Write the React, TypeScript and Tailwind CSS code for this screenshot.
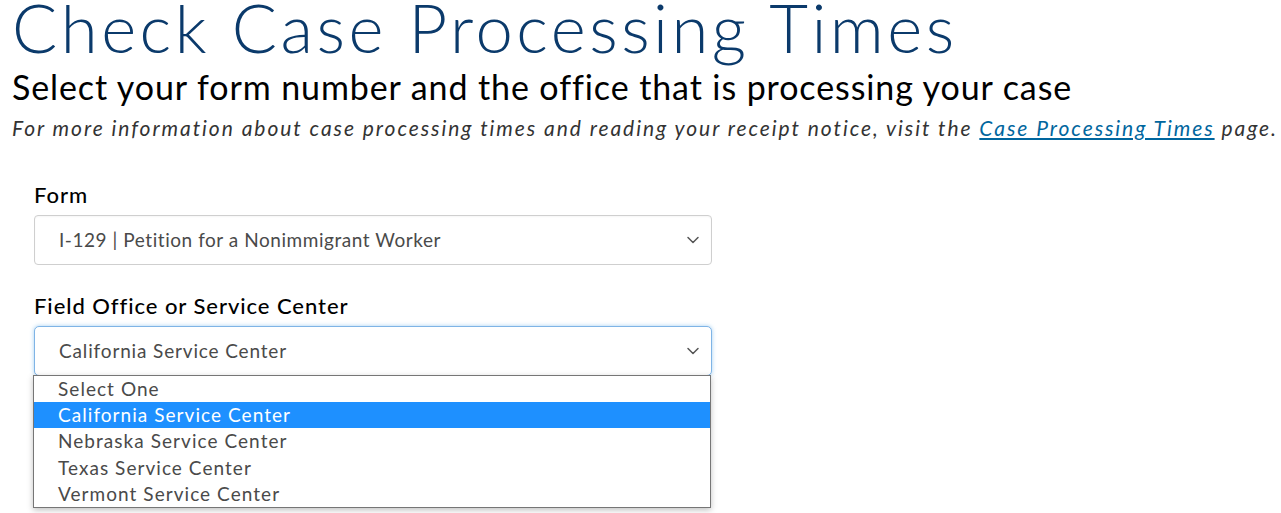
import { ChevronDown } from 'lucide-react'

const offices = [
  'Select One',
  'California Service Center',
  'Nebraska Service Center',
  'Texas Service Center',
  'Vermont Service Center',
]

export default function App() {
  return (
    <main className="h-[513px] overflow-hidden bg-white font-['Lato',sans-serif]">
      <div className="pl-3">
        <h1 className="whitespace-nowrap text-[67px] font-light leading-[54px] tracking-[3.5px] text-[#0b3a6b]">
          Check Case Processing Times
        </h1>
        <h2 className="mt-[16px] whitespace-nowrap text-[34px] leading-[34px] tracking-[0.9px] text-black">
          Select your form number and the office that is processing your case
        </h2>
        <p className="mt-[11px] whitespace-nowrap text-[21px] italic leading-[26px] tracking-[1.95px] text-[#333]">
          For more information about case processing times and reading your receipt notice, visit the{' '}
          <a href="#" className="text-[#00669e] underline underline-offset-2">
            Case Processing Times
          </a>{' '}
          page.
        </p>
      </div>

      <form className="mt-[42px] pl-[34px]">
        <label className="block text-[22px] font-medium leading-6 tracking-[0.95px] text-black">Form</label>
        <div className="mt-[8px] flex h-[50px] w-[678px] items-center justify-between rounded-[4px] border border-[#cfcfcf] bg-white pl-[24px] pr-[8px] shadow-[inset_0_1px_2px_rgba(0,0,0,0.04)]">
          <span className="text-[19px] tracking-[0.55px] text-[#4a4a4a]">I-129 | Petition for a Nonimmigrant Worker</span>
          <ChevronDown className="h-5 w-5 text-[#555]" strokeWidth={1.8} />
        </div>

        <label className="mt-[29px] block text-[22px] font-medium leading-6 tracking-[0.95px] text-black">
          Field Office or Service Center
        </label>
        <div className="relative mt-[8px] w-[678px]">
          <div className="flex h-[50px] items-center justify-between rounded-[5px] border border-[#7fb4e6] bg-white pl-[24px] pr-[8px] shadow-[0_0_4px_rgba(102,175,233,0.6)]">
            <span className="text-[19px] tracking-[0.85px] text-[#4a4a4a]">California Service Center</span>
            <ChevronDown className="h-5 w-5 text-[#555]" strokeWidth={1.8} />
          </div>
          <ul className="absolute left-[-1px] top-[49px] w-[678px] border border-[#767676] bg-white shadow-[0_2px_6px_rgba(0,0,0,0.25)]">
            {offices.map((office) => (
              <li
                key={office}
                className={
                  office === 'California Service Center'
                    ? 'h-[26.2px] bg-[#1e90ff] pl-[24px] text-[19px] leading-[26px] tracking-[1.05px] text-white'
                    : 'h-[26.2px] pl-[24px] text-[19px] leading-[26px] tracking-[1.05px] text-[#4a4a4a]'
                }
              >
                {office}
              </li>
            ))}
          </ul>
        </div>
      </form>
    </main>
  )
}
